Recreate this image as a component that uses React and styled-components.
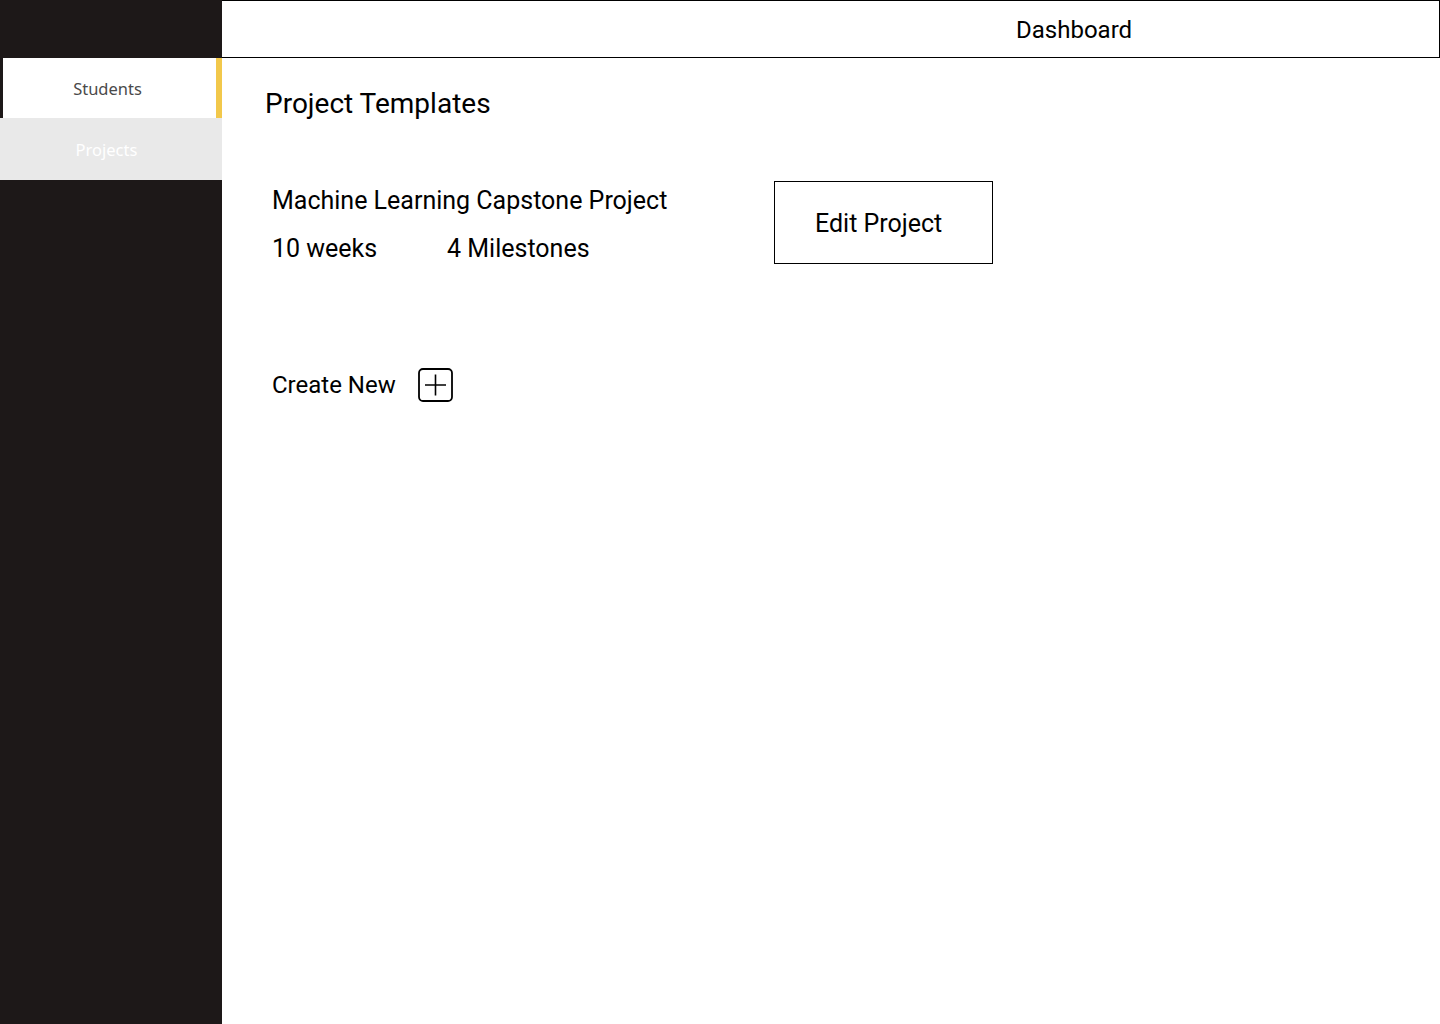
import React from "react";
import styled, { createGlobalStyle } from "styled-components";

const Global = createGlobalStyle`
  html, body { margin: 0; padding: 0; background: #fff; }
  body { font-family: Roboto, "Liberation Sans", sans-serif; color: #000; }
  * { box-sizing: border-box; }
`;

const Layout = styled.div`
  display: grid;
  grid-template-columns: 222px 1fr;
  min-height: 1024px;
  width: 1440px;
`;

const Sidebar = styled.nav`
  background: #1d1818;
  display: flex;
  flex-direction: column;
  padding-top: 58px;
`;

const NavItem = styled.div`
  height: ${(p) => (p.$active ? "60px" : "62px")};
  display: flex;
  align-items: center;
  justify-content: center;
  font-family: "Noto Sans", "Open Sans", sans-serif;
  font-size: 16.5px;
  background: ${(p) => (p.$active ? "#fff" : "#e9e9e9")};
  color: ${(p) => (p.$active ? "#4a4a4a" : "#fff")};
  margin-left: ${(p) => (p.$active ? "3px" : "0")};
  border-right: ${(p) => (p.$active ? "6px solid #f2c84b" : "none")};
  padding-right: ${(p) => (p.$active ? "4px" : "9px")};
`;

const Main = styled.main`
  display: flex;
  flex-direction: column;
`;

const Header = styled.header`
  height: 58px;
  border: 1px solid #000;
  border-left: none;
  display: flex;
  align-items: center;
  padding: 2px 0 0 794px;
  font-size: 24px;
`;

const Content = styled.section`
  padding: 29px 0 0 43px;
  display: flex;
  flex-direction: column;
`;

const Title = styled.h1`
  margin: 0;
  font-size: 28px;
  font-weight: 400;
`;

const Card = styled.div`
  margin: 61px 0 0 7px;
  display: flex;
  align-items: flex-start;
`;

const Info = styled.div`
  width: 502px;
  padding-top: 5px;
  display: flex;
  flex-direction: column;
  gap: 19px;
  font-size: 25px;
`;

const Meta = styled.div`
  display: flex;
`;

const MetaItem = styled.span`
  width: ${(p) => p.$w || "auto"};
`;

const EditButton = styled.button`
  width: 219px;
  height: 83px;
  border: 1px solid #000;
  background: #fff;
  font-family: Roboto, "Liberation Sans", sans-serif;
  font-size: 25px;
  color: #000;
  text-align: left;
  padding: 2px 0 0 40px;
  cursor: pointer;
`;

const CreateRow = styled.div`
  margin: 104px 0 0 7px;
  display: flex;
  align-items: center;
  gap: 22px;
  font-size: 24px;
`;

const PlusBox = styled.span`
  width: 35px;
  height: 34px;
  display: inline-flex;
`;

export default function App() {
  return (
    <>
      <Global />
      <Layout>
        <Sidebar>
          <NavItem $active>Students</NavItem>
          <NavItem>Projects</NavItem>
        </Sidebar>
        <Main>
          <Header>Dashboard</Header>
          <Content>
            <Title>Project Templates</Title>
            <Card>
              <Info>
                <span>Machine Learning Capstone Project</span>
                <Meta>
                  <MetaItem $w="175px">10 weeks</MetaItem>
                  <MetaItem>4 Milestones</MetaItem>
                </Meta>
              </Info>
              <EditButton>Edit Project</EditButton>
            </Card>
            <CreateRow>
              <span>Create New</span>
              <PlusBox>
                <svg width="35" height="34" viewBox="0 0 35 34" fill="none">
                  <rect x="1" y="1" width="33" height="32" rx="4" stroke="#000" strokeWidth="1.8" />
                  <path d="M7 17H28M17.5 6.5V27.5" stroke="#000" strokeWidth="1.6" />
                </svg>
              </PlusBox>
            </CreateRow>
          </Content>
        </Main>
      </Layout>
    </>
  );
}
